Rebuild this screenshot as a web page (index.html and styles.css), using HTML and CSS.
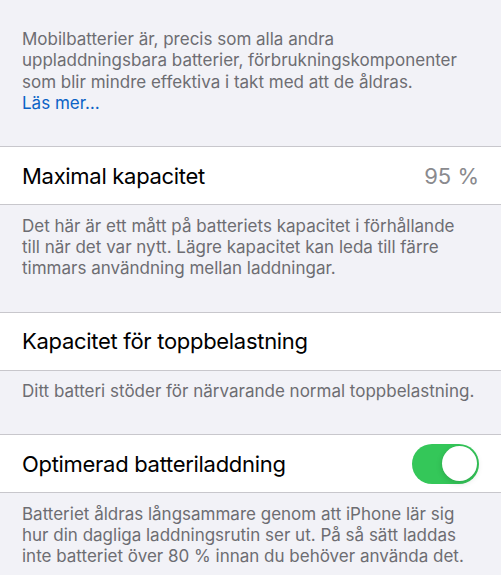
FILE: index.html
```html
<!DOCTYPE html>
<html lang="sv">
<head>
<meta charset="utf-8">
<title>Batteritillstånd</title>
<link rel="stylesheet" href="styles.css">
</head>
<body>
<main class="page">
  <p class="footer footer-first">Mobilbatterier är, precis som alla andra uppladdningsbara batterier, förbrukningskomponenter som blir mindre effektiva i takt med att de åldras.<br><a class="link" href="#">Läs mer…</a></p>

  <div class="cell">
    <span class="cell-title">Maximal kapacitet</span>
    <span class="cell-value">95 %</span>
  </div>
  <p class="footer">Det här är ett mått på batteriets kapacitet i förhållande till när det var nytt. Lägre kapacitet kan leda till färre timmars användning mellan laddningar.</p>

  <div class="cell">
    <span class="cell-title">Kapacitet för toppbelastning</span>
  </div>
  <p class="footer">Ditt batteri stöder för närvarande normal toppbelastning.</p>

  <div class="cell">
    <span class="cell-title">Optimerad batteriladdning</span>
    <span class="toggle on"><span class="knob"></span></span>
  </div>
  <p class="footer">Batteriet åldras långsammare genom att iPhone lär sig hur din dagliga laddningsrutin ser ut. På så sätt laddas inte batteriet över 80 % innan du behöver använda det.</p>
</main>
</body>
</html>
```

FILE: styles.css
```css
html, body {
  margin: 0;
  padding: 0;
  background: #f2f2f7;
}

.page {
  font-family: Inter, "Noto Sans", "Liberation Sans", sans-serif;
  display: flex;
  flex-direction: column;
  width: 501px;
  overflow: hidden;
}

.footer {
  margin: 0;
  padding: 10.5px 24px 32px 22px;
  font-size: 17px;
  line-height: 21.3px;
  color: #6d6d72;
}

.footer-first {
  padding-top: 29px;
}

.link {
  color: #0b63c6;
  text-decoration: none;
}

.cell {
  display: flex;
  align-items: center;
  justify-content: space-between;
  height: 57px;
  padding: 0 22px;
  background: #ffffff;
  border-top: 1px solid #c8c7cc;
  border-bottom: 1px solid #c8c7cc;
}

.cell-title {
  font-size: 22px;
  letter-spacing: -0.3px;
  color: #000000;
}

.cell-value {
  font-size: 22px;
  color: #8a8a8e;
}

.toggle {
  position: relative;
  width: 67px;
  height: 40px;
  border-radius: 20px;
  background: #e9e9eb;
  flex: none;
}

.toggle.on {
  background: #34c759;
}

.knob {
  position: absolute;
  top: 2.5px;
  left: 2.5px;
  width: 35px;
  height: 35px;
  border-radius: 50%;
  background: #ffffff;
  box-shadow: 0 2px 6px rgba(0, 0, 0, 0.15), 0 0 1px rgba(0, 0, 0, 0.1);
}

.toggle.on .knob {
  left: auto;
  right: 2.5px;
}
```
